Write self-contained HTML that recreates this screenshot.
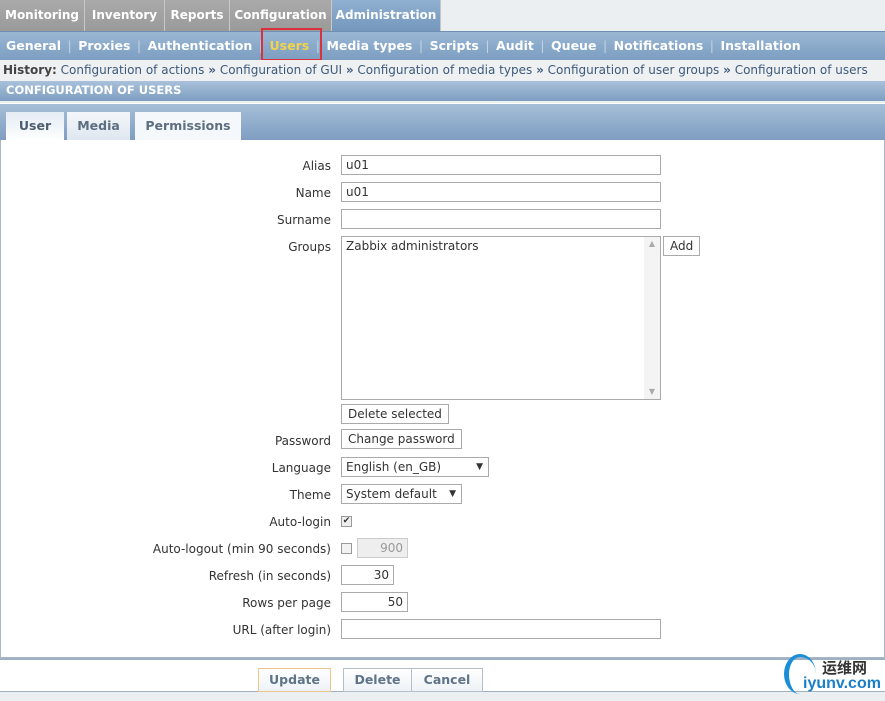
<!DOCTYPE html>
<html><head><meta charset="utf-8"><style>
*{margin:0;padding:0;box-sizing:border-box}
body{width:885px;height:701px;overflow:hidden;background:#eceff2;font-family:"DejaVu Sans","Liberation Sans",sans-serif;font-size:11.5px;color:#333;position:relative}
.a{position:absolute}
.top{top:0;left:0;height:31px;display:flex}
.top div{height:31px;line-height:30px;color:#fff;font-weight:bold;font-size:12px;text-align:center;background:linear-gradient(#aaa,#9a9a9a);border-right:1px solid #c8c8c8;white-space:nowrap;overflow:hidden}
.top div.on{background:linear-gradient(#8fb0d0,#7497bd)}
.sub{top:31px;left:0;width:885px;height:29px;background:linear-gradient(#9ab6d3,#7c9ec2);border-top:1px solid #6f8fb3;color:#fff;font-weight:bold;font-size:12.5px;line-height:28px;padding-left:6px;white-space:nowrap}
.sub span.s{color:#c3d3e5;margin:0 6.5px;font-weight:normal}
.hist{top:60px;left:0;width:885px;height:21px;line-height:21px;padding-left:3px;color:#3d5a7a;font-size:12px;white-space:nowrap;background:#eef0f2}
.hdr{top:81px;left:0;width:885px;height:20px;background:linear-gradient(#a9c1da,#7d9ec1);color:#fff;font-weight:bold;font-size:11.5px;line-height:19px;padding-left:6px}
.tabs{top:103px;left:0;width:885px;height:37px;background:linear-gradient(#a6bfd8,#7e9ec2);border-top:1px solid #fff}
.tab{top:8px;height:29px;line-height:28px;font-weight:bold;font-size:12.5px;color:#5c6e80;text-align:center}
.body{top:140px;left:0;width:885px;height:518px;background:#fff;border:1px solid #aab8c6;border-top:none}
.lbl{right:554px;width:300px;text-align:right;font-size:12px;color:#333}
.in{left:341px;height:20px;border:1px solid #aaa;background:#fff;font-size:12px;padding:1px 4px;line-height:16px}
.btn{height:20px;border:1px solid #aaa;background:#fff;font-size:12px;line-height:18px;padding:0 6px}
.foot{top:658px;left:0;width:885px;height:34px;background:#fff;border-top:2px solid #9fb0c0;border-bottom:1px solid #9fb0c0}
.fb{top:8px;height:24px;line-height:22px;font-weight:bold;font-size:12.5px;color:#5f7389;text-align:center;background:linear-gradient(#fff,#eef2f6);border:1px solid #b3c0cc}
</style></head><body>
<div class="a top"><div style="width:85px">Monitoring</div><div style="width:80px">Inventory</div><div style="width:65px">Reports</div><div style="width:102px">Configuration</div><div class="on" style="width:109px">Administration</div></div>
<div class="a sub">General<span class="s">|</span>Proxies<span class="s">|</span>Authentication<span class="s">|</span><span style="color:#f3d347">Users</span><span class="s">|</span>Media types<span class="s">|</span>Scripts<span class="s">|</span>Audit<span class="s">|</span>Queue<span class="s">|</span>Notifications<span class="s">|</span>Installation</div>
<div class="a" style="left:261px;top:28px;width:61px;height:33px;border:2px solid #d9323a"></div>
<div class="a hist"><b style="color:#444">History:</b> Configuration of actions <b>»</b> Configuration of GUI <b>»</b> Configuration of media types <b>»</b> Configuration of user groups <b>»</b> Configuration of users</div>
<div class="a hdr">CONFIGURATION OF USERS</div>
<div class="a tabs">
<div class="a tab" style="left:6px;width:58px;background:linear-gradient(#e4ecf4,#fff);color:#4c5e70">User</div>
<div class="a tab" style="left:67px;width:63px;background:linear-gradient(#f4f7fa,#dde6ef)">Media</div>
<div class="a tab" style="left:135px;width:106px;background:#f5f8fb">Permissions</div>
</div>
<div class="a body"></div>
<div class="a lbl" style="top:159px">Alias</div><div class="a in" style="top:155px;width:320px">u01</div>
<div class="a lbl" style="top:186px">Name</div><div class="a in" style="top:182px;width:320px">u01</div>
<div class="a lbl" style="top:213px">Surname</div><div class="a in" style="top:209px;width:320px"></div>
<div class="a lbl" style="top:240px">Groups</div>
<div class="a in" style="top:236px;width:320px;height:164px">Zabbix administrators
<div class="a" style="right:0;top:0;width:16px;height:162px;background:#f4f4f4;color:#aaa;font-size:8px;text-align:center;line-height:14px">▲<div class="a" style="bottom:0;width:16px">▼</div></div></div>
<div class="a btn" style="left:663px;top:236px">Add</div>
<div class="a btn" style="left:341px;top:404px">Delete selected</div>
<div class="a lbl" style="top:434px">Password</div><div class="a btn" style="left:341px;top:429px">Change password</div>
<div class="a lbl" style="top:461px">Language</div><div class="a in" style="top:457px;width:148px">English (en_GB)<span class="a" style="right:5px;font-size:9px">▼</span></div>
<div class="a lbl" style="top:488px">Theme</div><div class="a in" style="top:484px;width:121px">System default<span class="a" style="right:5px;font-size:9px">▼</span></div>
<div class="a lbl" style="top:515px">Auto-login</div><div class="a" style="left:341px;top:516px;width:11px;height:11px;border:1px solid #999;background:#eee;font-size:9px;line-height:9px;text-align:center">✔</div>
<div class="a lbl" style="top:542px">Auto-logout (min 90 seconds)</div><div class="a" style="left:341px;top:543px;width:11px;height:11px;border:1px solid #999;background:#f2f2f2"></div>
<div class="a in" style="left:357px;top:538px;width:51px;background:#eee;color:#999;text-align:right;border-color:#ccc">900</div>
<div class="a lbl" style="top:569px">Refresh (in seconds)</div><div class="a in" style="top:565px;width:53px;text-align:right">30</div>
<div class="a lbl" style="top:596px">Rows per page</div><div class="a in" style="top:592px;width:67px;text-align:right">50</div>
<div class="a lbl" style="top:623px">URL (after login)</div><div class="a in" style="top:619px;width:320px"></div>
<div class="a foot">
<div class="a fb" style="left:258px;width:73px;border-color:#e9c78c">Update</div>
<div class="a fb" style="left:343px;width:69px">Delete</div>
<div class="a fb" style="left:411px;width:72px">Cancel</div>
</div>
<div class="a" style="left:784px;top:654px;width:32px;height:40px;border-radius:50%;border-left:5px solid #1a8fd8;border-top:3px solid #1a8fd8"></div>
<div class="a" style="left:822px;top:657px;font-family:'Noto Sans CJK SC',sans-serif;font-weight:bold;font-size:15px;color:#333">运维网</div>
<div class="a" style="left:803px;top:675px;font-family:'Liberation Sans',sans-serif;font-weight:bold;font-size:16px;color:#1a7fc8">iyunv.com</div>
</body></html>
